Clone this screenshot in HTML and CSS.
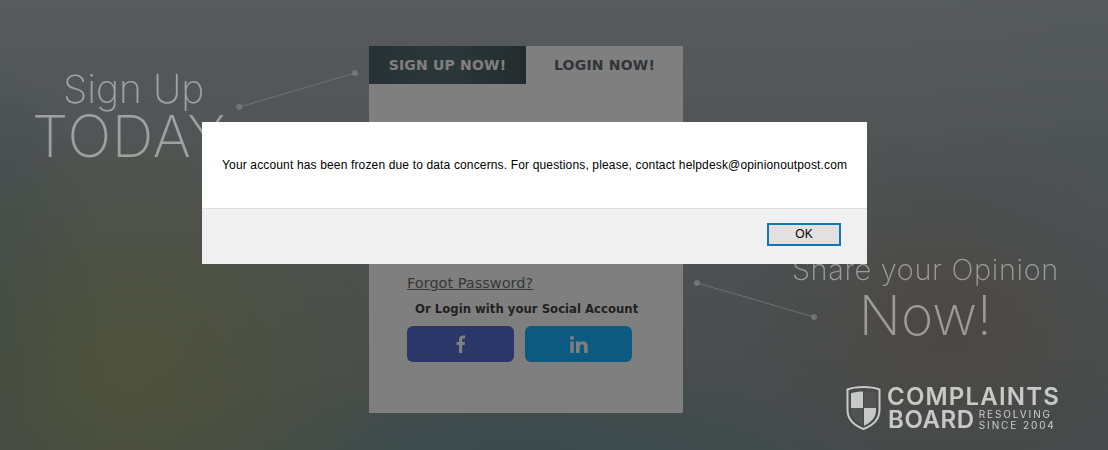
FILE: index.html
```html
<!DOCTYPE html>
<html lang="en">
<head>
    <meta charset="UTF-8">
    <meta name="viewport" content="width=device-width, initial-scale=1.0">
    <title>Login</title>
    <link rel="stylesheet" href="styles.css">
</head>
<body>
    <div class="page">
        <div class="side-left">
            <div class="sign-up">Sign Up</div>
            <div class="today">TODAY</div>
            <svg class="connector connector-left" width="130" height="50" viewBox="0 0 130 50">
                <line x1="4" y1="39" x2="120" y2="5" stroke="#fff" stroke-opacity="0.6" stroke-width="1.2"/>
                <circle cx="4" cy="39" r="3" fill="#fff" fill-opacity="0.75"/>
                <circle cx="120" cy="5" r="3" fill="#fff" fill-opacity="0.75"/>
            </svg>
        </div>

        <div class="panel">
            <div class="tabs">
                <div class="tab tab-active">SIGN UP NOW!</div>
                <div class="tab">LOGIN NOW!</div>
            </div>
            <div class="panel-body">
                <a class="forgot" href="#">Forgot Password?</a>
                <div class="social-title">Or Login with your Social Account</div>
                <div class="social-row">
                    <a class="social-btn facebook" href="#">
                        <svg width="10" height="18" viewBox="0 0 10 18"><path d="M3 18V10H0.5V7H3V4.6C3 1.8 4.6 0.5 6.9 0.5c1 0 1.9.1 2.2.1v2.8H7.6C6.4 3.4 6.2 4 6.2 4.9V7h2.9l-.4 3H6.2v8z" fill="#fff"/></svg>
                    </a>
                    <a class="social-btn linkedin" href="#">
                        <svg width="18" height="17" viewBox="0 0 18 17"><path d="M0.3 5.5H3.7V17H0.3zM2 0a2 2 0 1 1 0 4 2 2 0 0 1 0-4zM6 5.5h3.3v1.6C9.8 6.1 11 5.2 12.8 5.2c3.6 0 4.9 2.2 4.9 5.6V17h-3.5v-5.5c0-1.500-.2-3.300-2.100-3.300s-2.500 1.500-2.500 3.200V17H6z" fill="#fff"/></svg>
                    </a>
                </div>
            </div>
        </div>

        <div class="side-right">
            <div class="share">Share your Opinion</div>
            <div class="now">Now!</div>
            <svg class="connector connector-right" width="130" height="50" viewBox="0 0 130 50">
                <line x1="4" y1="4" x2="121" y2="38" stroke="#fff" stroke-opacity="0.6" stroke-width="1.2"/>
                <circle cx="4" cy="4" r="3" fill="#fff" fill-opacity="0.75"/>
                <circle cx="121" cy="38" r="3" fill="#fff" fill-opacity="0.75"/>
            </svg>
            <div class="logo">
                <svg class="shield" width="35" height="44" viewBox="0 0 35 44">
                    <path d="M17.500 1C11 1 5.500 2 1.500 3.500V24c0 9 7 15.500 16 19 9-3.500 16-10 16-19V3.500C29.500 2 24 1 17.500 1z" fill="none" stroke="#fff" stroke-width="2"/>
                    <path d="M17 5.500C12.500 5.500 8.500 6.100 5 7.200V22H17z" fill="#fff"/>
                    <path d="M18 22H30V24.500C30 31.500 25 36.500 18 39.800z" fill="#fff"/>
                    <path d="M18 5.500C22.500 5.500 26.500 6.100 30 7.200V22H18z" fill="#fff" fill-opacity="0.08"/>
                    <path d="M17 22H5V24.500C5 31.500 10 36.500 17 39.800z" fill="#fff" fill-opacity="0.08"/>
                </svg>
                <div class="logo-text">
                    <div class="logo-top">COMPLAINTS</div>
                    <div class="logo-bottom">
                        <span class="logo-board">BOARD</span>
                        <span class="logo-small">RESOLVING<br>SINCE 2004</span>
                    </div>
                </div>
            </div>
        </div>
    </div>

    <div class="overlay"></div>

    <div class="dialog">
        <div class="dialog-body">Your account has been frozen due to data concerns. For questions, please, contact helpdesk@opinionoutpost.com</div>
        <div class="dialog-footer">
            <button class="ok-btn">OK</button>
        </div>
    </div>
</body>
</html>
```

FILE: styles.css
```css
html, body {
    margin: 0;
    height: 100%;
    overflow: hidden;
}
body {
    font-family: "DejaVu Sans", sans-serif;
    background-color: #8c9698;
    background-image:
        radial-gradient(ellipse 280px 240px at 130px 370px, rgba(165, 170, 100, 0.65), rgba(165, 170, 100, 0)),
        radial-gradient(ellipse 110px 300px at 0px 340px, rgba(110, 140, 145, 0.6), rgba(110, 140, 145, 0)),
        radial-gradient(ellipse 380px 110px at 520px 470px, rgba(100, 150, 155, 0.7), rgba(100, 150, 155, 0)),
        radial-gradient(ellipse 220px 190px at 950px 320px, rgba(150, 125, 115, 0.4), rgba(150, 125, 115, 0)),
        radial-gradient(ellipse 260px 200px at 1108px 150px, rgba(140, 160, 180, 0.2), rgba(140, 160, 180, 0)),
        linear-gradient(180deg, #adb6b8 0%, #a0a8a8 35%, #8e9696 100%);
}
.page {
    display: grid;
    grid-template-columns: 369px 314px 1fr;
    height: 450px;
    position: relative;
}

/* side text */
.side-left, .side-right {
    position: relative;
    font-family: Inter, sans-serif;
    font-weight: 200;
}
/* these stay brighter than the rest of the dimmed page */
.sign-up, .today, .share, .now {
    position: relative;
    z-index: 1;
    color: rgba(255, 255, 255, 0.45);
}
.side-left {
    padding-top: 66px;
}
.sign-up {
    margin-left: 63px;
    font-size: 39px;
    line-height: 46px;
}
.today {
    margin-left: 32px;
    font-size: 58px;
    line-height: 48px;
    letter-spacing: 0.8px;
}
.side-right {
    display: flex;
    flex-direction: column;
    align-items: flex-end;
    padding: 251px 49px 0 0;
}
.share {
    font-size: 29px;
    line-height: 38px;
    letter-spacing: 0.65px;
}
.now {
    margin: -5px 67px 0 0;
    font-size: 55px;
    line-height: 62px;
}
.connector {
    position: absolute;
}
.connector-left {
    left: 235px;
    top: 68px;
}
.connector-right {
    left: 10px;
    top: 279px;
}

/* login panel */
.panel {
    margin-top: 46px;
    height: 367px;
    background-color: #fff;
}
.tabs {
    display: flex;
    height: 38px;
}
.tab {
    flex: 1;
    text-align: center;
    line-height: 38px;
    font-size: 14px;
    font-weight: bold;
    letter-spacing: 0.2px;
    color: #626b70;
}
.tab-active {
    flex: none;
    width: 157px;
    color: #fff;
    background: linear-gradient(90deg, #4c6468, #586f74 50%, #46585c);
}
.panel-body {
    padding: 191px 0 0 38px;
}
.forgot {
    display: block;
    font-size: 14.500px;
    line-height: 17px;
    color: #6c7072;
}
.social-title {
    margin: 8px 0 0 8px;
    font-family: "DejaVu Sans Condensed", "DejaVu Sans", sans-serif;
    font-size: 13px;
    font-weight: bold;
    line-height: 17px;
    color: #444;
}
.social-row {
    display: flex;
    gap: 11px;
    margin-top: 9px;
}
.social-btn {
    display: flex;
    align-items: center;
    justify-content: center;
    width: 107px;
    height: 36px;
    border-radius: 6px;
}
.facebook {
    background-color: #566ed0;
}
.linkedin {
    background-color: #19b4ff;
}

/* logo */
.logo {
    display: flex;
    position: absolute;
    z-index: 1;
    left: 163px;
    top: 386px;
    gap: 6px;
    color: #fff;
    font-family: Inter, sans-serif;
    font-weight: 600;
    opacity: 0.7;
}
.shield {
    flex: none;
}
.logo-top {
    font-size: 24px;
    line-height: 21px;
    letter-spacing: 1.2px;
}
.logo-bottom {
    display: flex;
    align-items: center;
    gap: 4px;
    margin: 2px 0 0 1px;
}
.logo-board {
    font-size: 24px;
    line-height: 20px;
    letter-spacing: 0.6px;
}
.logo-small {
    font-size: 10px;
    font-weight: 400;
    line-height: 11px;
    letter-spacing: 1.900px;
}

/* dialog */
.overlay {
    position: fixed;
    inset: 0;
    background-color: rgba(0, 0, 0, 0.5);
}
.dialog {
    position: fixed;
    z-index: 2;
    left: 202px;
    top: 122px;
    width: 665px;
    height: 142px;
    display: flex;
    flex-direction: column;
    background-color: #fff;
    font-family: "Liberation Sans", Arial, sans-serif;
    font-size: 12px;
    color: #000;
}
.dialog-body {
    height: 86px;
    padding-left: 20px;
    line-height: 86px;
    letter-spacing: 0.15px;
    white-space: nowrap;
}
.dialog-footer {
    flex: 1;
    display: flex;
    align-items: flex-start;
    justify-content: flex-end;
    padding: 14px 26px 0 0;
    background-color: #f0f0f0;
    border-top: 1px solid #dfdfdf;
}
.ok-btn {
    width: 74px;
    height: 23px;
    padding: 0 0 2px;
    border: 2px solid #0f78b4;
    background-color: #e1e1e1;
    font-family: "Liberation Sans", Arial, sans-serif;
    font-size: 12px;
    color: #000;
}
```
